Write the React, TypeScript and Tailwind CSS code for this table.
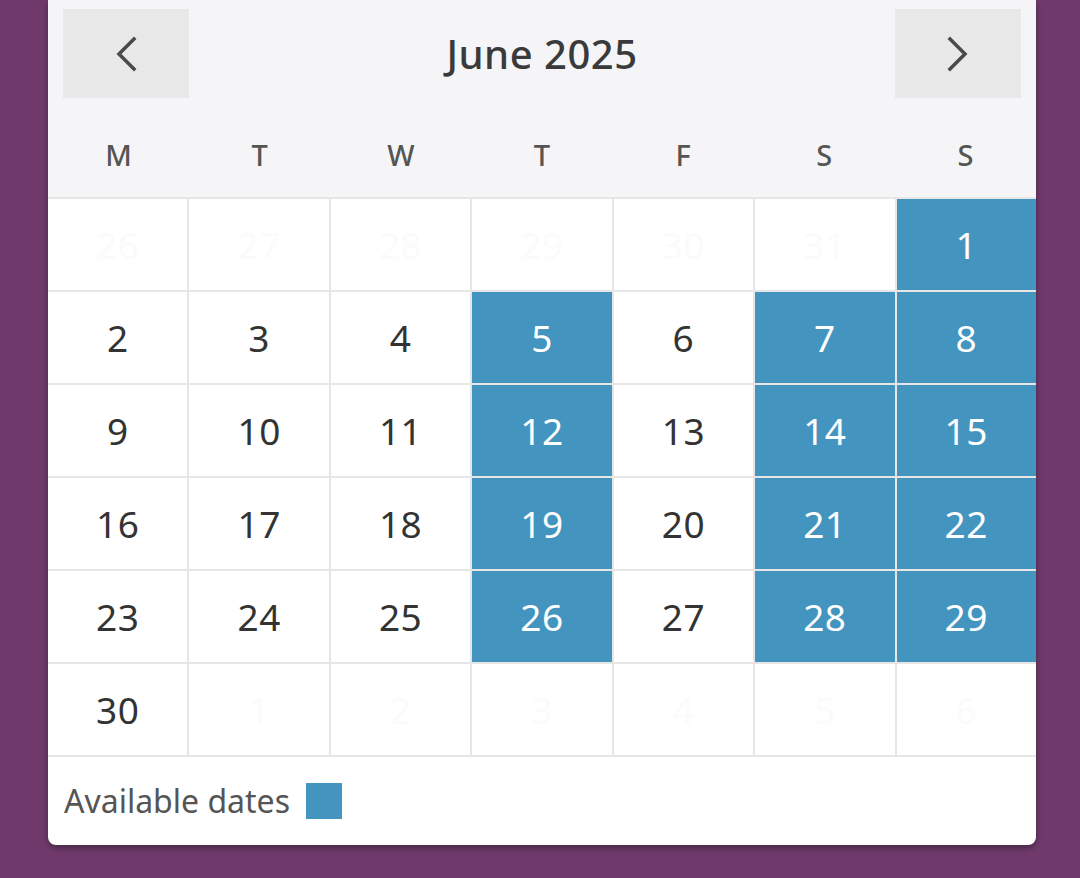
import React from 'react'

const available = new Set([1, 5, 7, 8, 12, 14, 15, 19, 21, 22, 26, 28, 29])
const dayNames = ['M', 'T', 'W', 'T', 'F', 'S', 'S']

type Cell = { day: number; inMonth: boolean }

function buildCells(): Cell[] {
  const cells: Cell[] = []
  // May tail
  for (let d = 26; d <= 31; d++) cells.push({ day: d, inMonth: false })
  for (let d = 1; d <= 30; d++) cells.push({ day: d, inMonth: true })
  let n = 1
  while (cells.length < 42) cells.push({ day: n++, inMonth: false })
  return cells
}

function Chevron({ dir }: { dir: 'left' | 'right' }) {
  return (
    <svg width="24" height="36" viewBox="0 0 24 36" fill="none">
      <path
        d={dir === 'left' ? 'M20 3 L5 18 L20 33' : 'M4 3 L19 18 L4 33'}
        stroke="#4a4a4a"
        strokeWidth="3.5"
        strokeLinecap="square"
      />
    </svg>
  )
}

export default function App() {
  const cells = buildCells()

  return (
    <div className="min-h-screen bg-[#6f3a6b] pl-[48px] font-['Noto_Sans',sans-serif]">
      <div className="w-[988px] bg-white rounded-b-lg shadow-[0_3px_6px_rgba(0,0,0,0.35)] overflow-hidden">
        {/* Header */}
        <div className="bg-[#f5f5f7]">
          <div className="flex items-center justify-between px-[15px] pt-[9px]">
            <button className="w-[126px] h-[89px] bg-[#e8e8e8] flex items-center justify-center">
              <Chevron dir="left" />
            </button>
            <div className="text-[40px] font-medium text-[#3a3a3a] leading-none tracking-[0.5px]">June 2025</div>
            <button className="w-[126px] h-[89px] bg-[#e8e8e8] flex items-center justify-center">
              <Chevron dir="right" />
            </button>
          </div>
          <div className="grid grid-cols-7 h-[99px] pt-[14px]">
            {dayNames.map((d, i) => (
              <div key={i} className="flex items-center justify-center text-[29px] font-medium text-[#555]">
                {d}
              </div>
            ))}
          </div>
        </div>

        {/* Days grid */}
        <div className="grid grid-cols-7 gap-[2px] bg-[#e6e6e6] py-[2px]">
          {cells.map((c, i) => {
            const isAvail = c.inMonth && available.has(c.day)
            return (
              <div
                key={i}
                className={
                  'h-[91px] flex items-center justify-center text-[37px] tracking-[0.5px] ' +
                  (isAvail
                    ? 'bg-[#4395bf] text-white'
                    : c.inMonth
                    ? 'bg-white text-[#333]'
                    : 'bg-white text-[#fbfbfb]')
                }
              >
                {c.day}
              </div>
            )
          })}
        </div>

        {/* Legend */}
        <div className="flex items-center gap-[16px] h-[88px] pl-[16px]">
          <span className="text-[32px] text-[#555]">Available dates</span>
          <span className="w-[36px] h-[36px] bg-[#4395bf]" />
        </div>
      </div>
    </div>
  )
}
